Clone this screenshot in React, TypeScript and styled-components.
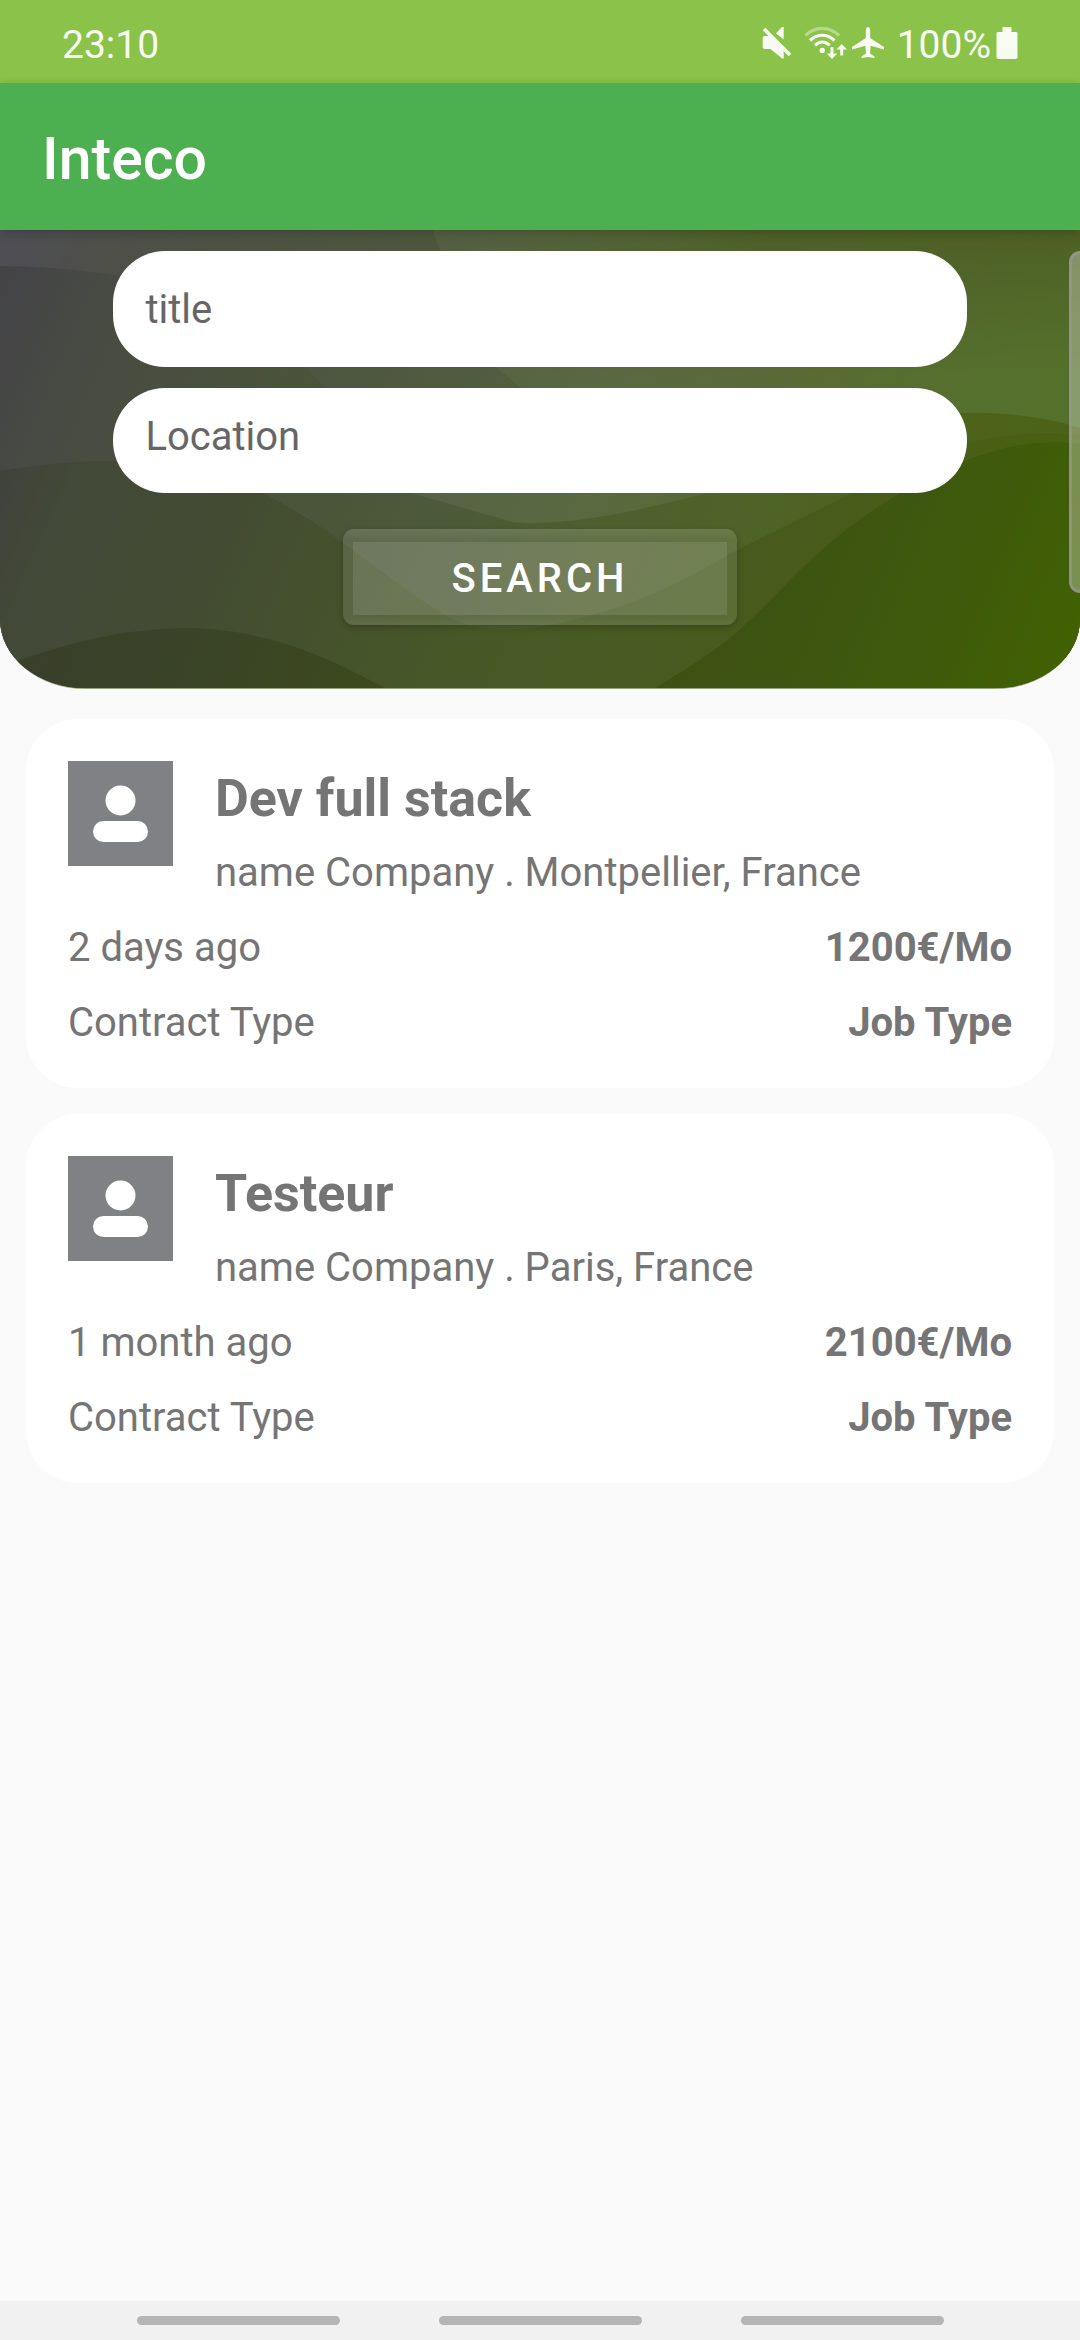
import React from "react";
import styled, { createGlobalStyle } from "styled-components";

const GlobalStyle = createGlobalStyle`
  *, *::before, *::after { box-sizing: border-box; }
  body {
    margin: 0;
    background: #fafafa;
    font-family: Roboto, "Noto Sans", sans-serif;
  }
`;

const Screen = styled.div`
  display: flex;
  flex-direction: column;
  min-height: 100vh;
  background: #fafafa;
`;

const StatusBar = styled.div`
  display: flex;
  align-items: center;
  justify-content: space-between;
  height: 83px;
  padding: 6px 62px 0;
  background: #8bc34a;
  color: #f7fbf1;
  font-size: 39px;
  line-height: 48px;
`;

const StatusIcons = styled.div`
  display: flex;
  align-items: center;
  gap: 4px;
`;

const BatteryLevel = styled.span`
  display: flex;
  align-items: center;
  gap: 5px;
  padding-left: 8px;
`;

const StatusIcon = styled.svg`
  display: block;
  fill: currentColor;
  margin-bottom: 4px;
`;

const AppBar = styled.header`
  position: relative;
  z-index: 1;
  display: flex;
  align-items: center;
  height: 147px;
  padding: 5px 42px 0;
  background: #4caf50;
  box-shadow: 0 2px 10px rgba(0, 0, 0, 0.2);
`;

const AppTitle = styled.h1`
  margin: 0;
  color: #fff;
  font-size: 59px;
  font-weight: 500;
  line-height: 68px;
`;

const Hero = styled.section`
  position: relative;
  overflow: hidden;
  padding: 21px 0 63px;
  border-radius: 0 0 85px 85px / 0 0 70px 70px;
  border-bottom: 1px solid #98a480;
`;

const Waves = styled.svg`
  position: absolute;
  inset: 0;
  width: 100%;
  height: 100%;
`;

const SearchForm = styled.form`
  position: relative;
  display: flex;
  flex-direction: column;
  align-items: center;
  gap: 21px;
`;

const Field = styled.input<{ $compact?: boolean }>`
  width: 79%;
  height: ${(p) => (p.$compact ? 105 : 116)}px;
  padding: 0 32px ${(p) => (p.$compact ? 8 : 0)}px;
  border: 0;
  border-radius: 52px;
  outline: 0;
  background: #fff;
  color: #333;
  font-family: inherit;
  font-size: 40px;

  &::placeholder {
    color: #666;
    opacity: 1;
  }
`;

const SearchButton = styled.button`
  width: 394px;
  height: 96px;
  margin-top: 15px;
  padding: 0;
  border: 10px solid transparent;
  border-top-width: 13px;
  border-radius: 11px;
  background:
    linear-gradient(rgba(255, 255, 255, 0.1), rgba(255, 255, 255, 0.1)) padding-box,
    linear-gradient(
      rgba(255, 255, 255, 0.17),
      rgba(255, 255, 255, 0.11) 11px,
      rgba(255, 255, 255, 0.11) 88px,
      rgba(255, 255, 255, 0.15)
    ) border-box;
  box-shadow: 0 2px 6px rgba(0, 0, 0, 0.22);
  color: #fff;
  font-family: inherit;
  font-size: 40px;
  font-weight: 500;
  letter-spacing: 4px;
  text-transform: uppercase;
`;

const NextPanel = styled.div`
  position: absolute;
  top: 21px;
  right: 0;
  width: 11px;
  height: 342px;
  border: 3px solid rgba(150, 150, 150, 0.75);
  border-right: 0;
  border-radius: 12px 0 0 12px;
  background: rgba(255, 255, 255, 0.3);
`;

const JobList = styled.ul`
  display: flex;
  flex: 1;
  flex-direction: column;
  gap: 26px;
  margin: 0;
  padding: 30px 26px;
  list-style: none;
`;

const JobCard = styled.li`
  display: flex;
  flex-direction: column;
  gap: 28px;
  padding: 42px;
  border-radius: 52px;
  background: #fff;
  color: #757575;
  font-size: 40px;
  line-height: 47px;
`;

const JobHeader = styled.div`
  display: flex;
  align-items: flex-start;
  gap: 42px;
`;

const Avatar = styled.svg`
  flex: none;
  display: block;
  width: 105px;
  height: 105px;
  background: #808184;
`;

const JobHeading = styled.div`
  display: flex;
  flex-direction: column;
  gap: 19px;
  padding-top: 7px;
`;

const JobTitle = styled.h2`
  margin: 0;
  font-size: 52px;
  font-weight: 700;
  line-height: 62px;
`;

const JobRow = styled.div`
  display: flex;
  justify-content: space-between;
`;

const NavBar = styled.nav`
  display: flex;
  align-items: center;
  justify-content: center;
  gap: 99px;
  height: 39px;
  background: #f1f1f1;
`;

const NavHandle = styled.button`
  width: 203px;
  height: 9px;
  padding: 0;
  border: 0;
  border-radius: 5px;
  background: #b5b5b5;
`;

type Job = {
  title: string;
  place: string;
  posted: string;
  salary: string;
};

const jobs: Job[] = [
  { title: "Dev full stack", place: "name Company . Montpellier, France", posted: "2 days ago", salary: "1200€/Mo" },
  { title: "Testeur", place: "name Company . Paris, France", posted: "1 month ago", salary: "2100€/Mo" },
];

const MutedIcon = () => (
  <StatusIcon width="38" height="34" viewBox="0 0 38 34" aria-label="Muted">
    <path d="M14 7.5 20 1h1.700v12.500z" />
    <path d="M.7 11.500 2 10h7l12.700 13v9.500h-1.500L8.500 23H2L.7 21.500z" />
    <path d="M2 3 28 29" fill="none" stroke="currentColor" strokeWidth="3.600" />
  </StatusIcon>
);

const WifiIcon = () => (
  <StatusIcon width="43" height="34" viewBox="0 0 43 34" aria-label="Wi-Fi">
    <g fill="none" stroke="currentColor" strokeWidth="3.200">
      <path d="M1.500 9.500C11 0 25.500 0 35 9.500" opacity=".4" />
      <path d="M6 14.500C13 7.500 23.500 7.500 30.500 14.500" />
      <path d="M11 19.300c4.300-4.400 10.300-4.400 14.600 0" />
    </g>
    <circle cx="18.300" cy="24.500" r="2.700" />
    <path d="M26.500 21h3v6.500h3.800L28 33l-5.300-5.500h3.800z" />
    <path d="M36.200 29.500h3V23.500H43L37.700 18l-5.300 5.500h3.800z" />
  </StatusIcon>
);

const AirplaneIcon = () => (
  <StatusIcon width="34" height="34" viewBox="0 0 34 34" aria-label="Airplane mode">
    <path d="M17 1c1.500 0 2.200 2 2.200 4v7l13.800 9v2.500l-13.300-3.800-.7 7.800 4.500 3v1.500l-6.500-1-6.500 1v-1.500l4.500-3-.7-7.800L1 23.500V21l13.800-9V5c0-2 .7-4 2.200-4z" />
  </StatusIcon>
);

const BatteryIcon = () => (
  <StatusIcon width="22" height="34" viewBox="0 0 22 34" aria-label="Battery full">
    <path d="M6.500 1h9v5H20c1 0 1.500.5 1.500 1.500V31c0 1.200-.8 2-2 2h-17c-1.200 0-2-.8-2-2V7.500C.5 6.500 1 6 2 6h4.500z" />
  </StatusIcon>
);

type WaveLayer = { id: string; stops: [number, string][]; d: string };

const waveLayers: WaveLayer[] = [
  {
    id: "base",
    stops: [[0, "#4e4d55"], [0.09, "#4d4f48"], [0.34, "#4d563d"], [1, "#526925"]],
    d: "M0 0H1080V458H0z",
  },
  {
    id: "light",
    stops: [[0.3, "#525c44"], [0.4, "#566143"], [0.52, "#5a6842"], [0.68, "#586b34"], [0.84, "#55702c"], [1, "#55702b"]],
    d: "M433 0C436 10 438 16 441 21 450 70 470 110 497 138H307L323 157C350 200 380 250 415 264L540 300 1080 260V0z",
  },
  {
    id: "mid",
    stops: [[0.02, "#444447"], [0.11, "#484b43"], [0.28, "#4a533a"], [0.45, "#4d5a38"], [0.57, "#4f5f2f"], [0.69, "#4f6328"], [0.81, "#4d6319"], [0.92, "#4c6218"]],
    d: "M0 36C40 36 80 40 115 45 200 62 260 95 307 138L323 157C350 195 385 250 415 264 445 283 480 291 530 293 590 292 640 280 695 266 790 245 880 195 963 183 1000 182 1045 186 1080 198V458H0z",
  },
  {
    id: "low",
    stops: [[0.08, "#40423c"], [0.14, "#424938"], [0.26, "#434b33"], [0.5, "#475827"], [0.66, "#485a20"], [0.74, "#485b1b"], [0.86, "#486014"]],
    d: "M0 241C40 234 75 231 115 231 170 229 220 240 265 264 310 288 330 303 353 320 390 348 420 370 450 388 480 402 520 404 580 388 640 374 690 347 737 320L850 264C890 242 925 222 967 213 1010 203 1045 201 1080 205V458H0z",
  },
  {
    id: "deep",
    stops: [[0.66, "#3d5014"], [0.76, "#3e5511"], [0.885, "#3f5b0a"], [1, "#426200"]],
    d: "M655 458C685 440 710 424 730 408 760 382 780 360 800 340 835 306 868 282 900 263 925 247 945 238 967 230 1005 215 1040 209 1080 214V458z",
  },
  {
    id: "hill",
    stops: [[0.16, "#393f2b"], [0.3, "#3a4427"], [0.45, "#3c491c"]],
    d: "M0 437C60 415 120 398 190 398 265 400 320 423 385 458H0z",
  },
];

const HeroWaves = () => (
  <Waves viewBox="0 0 1080 458" preserveAspectRatio="none" aria-hidden="true">
    <defs>
      <linearGradient id="wave-shade" x1="0" y1="0" x2="0" y2="1">
        <stop offset="0" stopColor="#4a5c22" stopOpacity="0.8" />
        <stop offset="1" stopColor="#4e5f28" stopOpacity="0" />
      </linearGradient>
      <linearGradient id="wave-shade-fade" x1="0" y1="0" x2="1" y2="0">
        <stop offset="0" stopColor="#000" />
        <stop offset="0.5" stopColor="#fff" />
      </linearGradient>
      <mask id="wave-shade-mask">
        <rect x="433" width="647" height="140" fill="url(#wave-shade-fade)" />
      </mask>
      {waveLayers.map((layer) => (
        <linearGradient
          key={layer.id}
          id={`wave-${layer.id}`}
          gradientUnits="userSpaceOnUse"
          x1="0"
          y1="0"
          x2="1080"
          y2="458"
        >
          {layer.stops.map(([offset, color]) => (
            <stop key={offset} offset={offset} stopColor={color} />
          ))}
        </linearGradient>
      ))}
    </defs>
    {waveLayers.slice(0, 2).map((layer) => (
      <path key={layer.id} d={layer.d} fill={`url(#wave-${layer.id})`} />
    ))}
    <path d="M433 0H1080V140H497C465 100 445 50 433 0z" fill="url(#wave-shade)" mask="url(#wave-shade-mask)" />
    <path d="M300 138H497L520 157 560 240 400 252 323 157z" fill="#000" opacity=".06" />
    {waveLayers.slice(2).map((layer) => (
      <path key={layer.id} d={layer.d} fill={`url(#wave-${layer.id})`} />
    ))}
  </Waves>
);

export default function App() {
  return (
    <Screen>
      <GlobalStyle />
      <StatusBar>
        <span>23:10</span>
        <StatusIcons>
          <MutedIcon />
          <WifiIcon />
          <AirplaneIcon />
          <BatteryLevel>
            100%
            <BatteryIcon />
          </BatteryLevel>
        </StatusIcons>
      </StatusBar>
      <AppBar>
        <AppTitle>Inteco</AppTitle>
      </AppBar>
      <Hero>
        <HeroWaves />
        <SearchForm onSubmit={(e) => e.preventDefault()}>
          <Field type="text" name="title" placeholder="title" aria-label="title" />
          <Field type="text" name="location" placeholder="Location" aria-label="Location" $compact />
          <SearchButton type="submit">Search</SearchButton>
        </SearchForm>
        <NextPanel />
      </Hero>
      <JobList>
        {jobs.map((job) => (
          <JobCard key={job.title}>
            <JobHeader>
              <Avatar viewBox="0 0 105 105" aria-hidden="true">
                <circle cx="52.500" cy="39.500" r="15" fill="#fff" />
                <rect x="25" y="60" width="55" height="21" rx="10.500" fill="#fff" />
              </Avatar>
              <JobHeading>
                <JobTitle>{job.title}</JobTitle>
                <span>{job.place}</span>
              </JobHeading>
            </JobHeader>
            <JobRow>
              <span>{job.posted}</span>
              <strong>{job.salary}</strong>
            </JobRow>
            <JobRow>
              <span>Contract Type</span>
              <strong>Job Type</strong>
            </JobRow>
          </JobCard>
        ))}
      </JobList>
      <NavBar aria-label="System navigation">
        <NavHandle type="button" aria-label="Recent apps" />
        <NavHandle type="button" aria-label="Home" />
        <NavHandle type="button" aria-label="Back" />
      </NavBar>
    </Screen>
  );
}
